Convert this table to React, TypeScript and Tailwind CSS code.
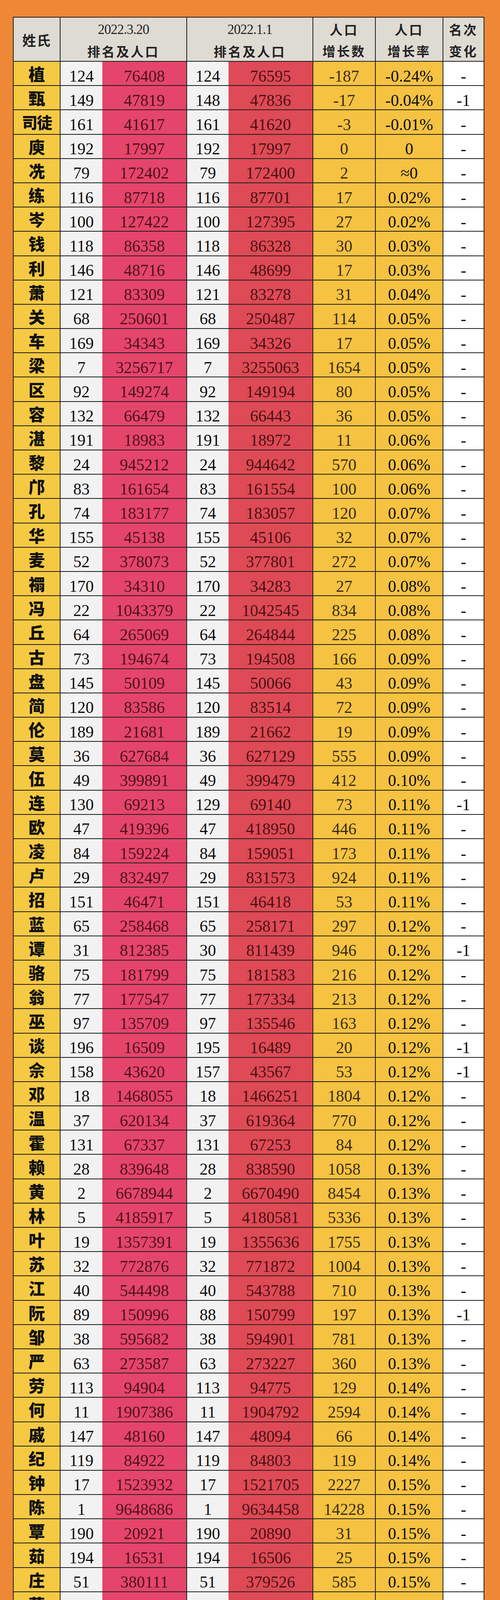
import React from 'react';

type Row = [string, string, string, string, string, string, string, string];

// 姓氏, 3.20排名, 3.20人口, 1.1排名, 1.1人口, 增长数, 增长率, 名次变化
const rows: Row[] = [
    ['植', '124', '76408', '124', '76595', '-187', '-0.24%', '-'],
    ['甄', '149', '47819', '148', '47836', '-17', '-0.04%', '-1'],
    ['司徒', '161', '41617', '161', '41620', '-3', '-0.01%', '-'],
    ['庾', '192', '17997', '192', '17997', '0', '0', '-'],
    ['冼', '79', '172402', '79', '172400', '2', '≈0', '-'],
    ['练', '116', '87718', '116', '87701', '17', '0.02%', '-'],
    ['岑', '100', '127422', '100', '127395', '27', '0.02%', '-'],
    ['钱', '118', '86358', '118', '86328', '30', '0.03%', '-'],
    ['利', '146', '48716', '146', '48699', '17', '0.03%', '-'],
    ['萧', '121', '83309', '121', '83278', '31', '0.04%', '-'],
    ['关', '68', '250601', '68', '250487', '114', '0.05%', '-'],
    ['车', '169', '34343', '169', '34326', '17', '0.05%', '-'],
    ['梁', '7', '3256717', '7', '3255063', '1654', '0.05%', '-'],
    ['区', '92', '149274', '92', '149194', '80', '0.05%', '-'],
    ['容', '132', '66479', '132', '66443', '36', '0.05%', '-'],
    ['湛', '191', '18983', '191', '18972', '11', '0.06%', '-'],
    ['黎', '24', '945212', '24', '944642', '570', '0.06%', '-'],
    ['邝', '83', '161654', '83', '161554', '100', '0.06%', '-'],
    ['孔', '74', '183177', '74', '183057', '120', '0.07%', '-'],
    ['华', '155', '45138', '155', '45106', '32', '0.07%', '-'],
    ['麦', '52', '378073', '52', '377801', '272', '0.07%', '-'],
    ['禤', '170', '34310', '170', '34283', '27', '0.08%', '-'],
    ['冯', '22', '1043379', '22', '1042545', '834', '0.08%', '-'],
    ['丘', '64', '265069', '64', '264844', '225', '0.08%', '-'],
    ['古', '73', '194674', '73', '194508', '166', '0.09%', '-'],
    ['盘', '145', '50109', '145', '50066', '43', '0.09%', '-'],
    ['简', '120', '83586', '120', '83514', '72', '0.09%', '-'],
    ['伦', '189', '21681', '189', '21662', '19', '0.09%', '-'],
    ['莫', '36', '627684', '36', '627129', '555', '0.09%', '-'],
    ['伍', '49', '399891', '49', '399479', '412', '0.10%', '-'],
    ['连', '130', '69213', '129', '69140', '73', '0.11%', '-1'],
    ['欧', '47', '419396', '47', '418950', '446', '0.11%', '-'],
    ['凌', '84', '159224', '84', '159051', '173', '0.11%', '-'],
    ['卢', '29', '832497', '29', '831573', '924', '0.11%', '-'],
    ['招', '151', '46471', '151', '46418', '53', '0.11%', '-'],
    ['蓝', '65', '258468', '65', '258171', '297', '0.12%', '-'],
    ['谭', '31', '812385', '30', '811439', '946', '0.12%', '-1'],
    ['骆', '75', '181799', '75', '181583', '216', '0.12%', '-'],
    ['翁', '77', '177547', '77', '177334', '213', '0.12%', '-'],
    ['巫', '97', '135709', '97', '135546', '163', '0.12%', '-'],
    ['谈', '196', '16509', '195', '16489', '20', '0.12%', '-1'],
    ['佘', '158', '43620', '157', '43567', '53', '0.12%', '-1'],
    ['邓', '18', '1468055', '18', '1466251', '1804', '0.12%', '-'],
    ['温', '37', '620134', '37', '619364', '770', '0.12%', '-'],
    ['霍', '131', '67337', '131', '67253', '84', '0.12%', '-'],
    ['赖', '28', '839648', '28', '838590', '1058', '0.13%', '-'],
    ['黄', '2', '6678944', '2', '6670490', '8454', '0.13%', '-'],
    ['林', '5', '4185917', '5', '4180581', '5336', '0.13%', '-'],
    ['叶', '19', '1357391', '19', '1355636', '1755', '0.13%', '-'],
    ['苏', '32', '772876', '32', '771872', '1004', '0.13%', '-'],
    ['江', '40', '544498', '40', '543788', '710', '0.13%', '-'],
    ['阮', '89', '150996', '88', '150799', '197', '0.13%', '-1'],
    ['邹', '38', '595682', '38', '594901', '781', '0.13%', '-'],
    ['严', '63', '273587', '63', '273227', '360', '0.13%', '-'],
    ['劳', '113', '94904', '113', '94775', '129', '0.14%', '-'],
    ['何', '11', '1907386', '11', '1904792', '2594', '0.14%', '-'],
    ['戚', '147', '48160', '147', '48094', '66', '0.14%', '-'],
    ['纪', '119', '84922', '119', '84803', '119', '0.14%', '-'],
    ['钟', '17', '1523932', '17', '1521705', '2227', '0.15%', '-'],
    ['陈', '1', '9648686', '1', '9634458', '14228', '0.15%', '-'],
    ['覃', '190', '20921', '190', '20890', '31', '0.15%', '-'],
    ['茹', '194', '16531', '194', '16506', '25', '0.15%', '-'],
    ['庄', '51', '380111', '51', '379526', '585', '0.15%', '-'],
    ['蔡', '20', '1291898', '20', '1289904', '1994', '0.15%', '-'],
    ['许', '23', '1019638', '23', '1018064', '1574', '0.15%', '-'],
    ['柯', '71', '201097', '71', '200781', '316', '0.16%', '-'],
    ['成', '105', '112434', '105', '112257', '177', '0.16%', '-'],
    ['廖', '26', '891388', '26', '889972', '1416', '0.16%', '-'],
    ['潘', '33', '745580', '33', '744391', '1189', '0.16%', '-'],
    ['谢', '14', '1659945', '14', '1657260', '2685', '0.16%', '-'],
    ['沈', '56', '314669', '56', '314156', '513', '0.16%', '-'],
    ['余', '35', '731187', '35', '729975', '1212', '0.17%', '-'],
    ['罗', '13', '1733609', '13', '1730704', '2905', '0.17%', '-'],
    ['詹', '61', '280069', '61', '279597', '472', '0.17%', '-'],
    ['傅', '103', '114746', '103', '114551', '195', '0.17%', '-'],
    ['邬', '152', '45703', '152', '45625', '78', '0.17%', '-'],
    ['池', '174', '33373', '174', '33316', '57', '0.17%', '-'],
    ['曾', '15', '1589754', '15', '1587038', '2716', '0.17%', '-'],
    ['吴', '8', '3162095', '8', '3156682', '5413', '0.17%', '-'],
    ['吕', '58', '312335', '57', '311800', '535', '0.17%', '-1'],
    ['陆', '53', '350298', '53', '349696', '602', '0.17%', '-'],
    ['饶', '136', '62570', '135', '62462', '108', '0.17%', '-1'],
    ['郑', '12', '1866506', '12', '1863278', '3228', '0.17%', '-'],
    ['郭', '25', '932640', '25', '930985', '1655', '0.18%', '-'],
    ['缪', '156', '43956', '156', '43876', '80', '0.18%', '-'],
    ['刁', '160', '41743', '160', '41667', '76', '0.18%', '-'],
    ['范', '55', '325387', '55', '324788', '599', '0.18%', '-'],
    ['杜', '62', '276693', '62', '276177', '516', '0.19%', '-'],
    ['房', '123', '81473', '123', '81321', '152', '0.19%', '-'],
    ['姚', '48', '407821', '48', '407060', '761', '0.19%', '-'],
    ['毕', '176', '30986', '176', '30928', '58', '0.19%', '-'],
    ['方', '46', '426829', '46', '426011', '818', '0.19%', '-'],
    ['卓', '85', '152753', '85', '152459', '294', '0.19%', '-'],
    ['李', '3', '6369141', '3', '6356697', '12444', '0.20%', '-'],
    ['官', '134', '64929', '134', '64799', '130', '0.20%', '-'],
    ['洪', '54', '346318', '54', '345622', '696', '0.20%', '-'],
    ['尤', '173', '33664', '172', '33596', '68', '0.20%', '-1'],
    ['邵', '45', '435701', '45', '434814', '887', '0.20%', '-'],
    ['甘', '87', '152045', '87', '151734', '311', '0.20%', '-'],
];

const serif = "font-['Liberation_Serif','Times_New_Roman',serif]";
const cjk = "font-['Noto_Sans_CJK_SC','Noto_Sans',sans-serif]";
const num = `${serif} flex items-center justify-center pt-[13px] text-[42px] leading-none`;

function HeaderCell({ top, bottom, className = '' }: { top: string; bottom: string; className?: string }) {
    const isDate = /^\d/.test(top);
    return (
        <div className={`flex flex-col items-center justify-center gap-[22px] pt-1 text-[#232323] ${className}`}>
            <span
                className={
                    isDate
                        ? `${serif} text-[35px] leading-none tracking-[-1px]`
                        : `${cjk} text-[33px] font-bold leading-none tracking-[4px]`
                }
            >
                {top}
            </span>
            <span className={`${cjk} text-[33px] font-bold leading-none tracking-[4px]`}>{bottom}</span>
        </div>
    );
}

export default function App() {
    return (
        <div className="h-[6301px] w-[1280px] overflow-hidden bg-[#ef8836] pl-[33px] pt-[43px]">
            <div className="w-[1207px] border-2 border-[#1d1d1d]">
                {/* Header */}
                <div className="grid h-[113px] grid-cols-[120px_324px_323px_160px_173px_103px] border-b-2 border-[#1d1d1d] bg-[#dedbd3]">
                    <div className={`${cjk} flex items-center justify-center border-r-2 border-[#1d1d1d] pt-1 text-[35px] font-bold tracking-[2px] text-[#232323]`}>
                        姓氏
                    </div>
                    <HeaderCell top="2022.3.20" bottom="排名及人口" className="border-r-2 border-[#1d1d1d]" />
                    <HeaderCell top="2022.1.1" bottom="排名及人口" className="border-r-2 border-[#1d1d1d]" />
                    <HeaderCell top="人口" bottom="增长数" className="border-r-2 border-[#1d1d1d]" />
                    <HeaderCell top="人口" bottom="增长率" className="border-r-2 border-[#1d1d1d]" />
                    <HeaderCell top="名次" bottom="变化" />
                </div>

                {/* Rows */}
                {rows.map(([name, r1, p1, r2, p2, diff, rate, change], i) => (
                    <div
                        key={i}
                        className="grid h-[62.19px] grid-cols-[120px_107px_217px_106px_217px_160px_173px_103px] border-b-2 border-[#1d1d1d]"
                    >
                        <div
                            className={`${cjk} flex items-center justify-center overflow-hidden border-r-2 border-[#1d1d1d] bg-[#f6c943] font-black leading-none text-[#111] ${name.length > 1 ? 'text-[40px] tracking-[-2px]' : 'text-[42px]'}`}
                        >
                            {name}
                        </div>
                        <div className={`${num} bg-[#f2f2f2] text-[#0d0d0d]`}>{r1}</div>
                        <div className={`${num} border-r-2 border-[#1d1d1d] bg-[#e5456a] text-[#4e1019]`}>{p1}</div>
                        <div className={`${num} bg-[#f2f2f2] text-[#0d0d0d]`}>{r2}</div>
                        <div className={`${num} border-r-2 border-[#1d1d1d] bg-[#de4a55] text-[#4a1015]`}>{p2}</div>
                        <div className={`${num} border-r-2 border-[#1d1d1d] bg-[#f5c242] text-[#3a2c12]`}>{diff}</div>
                        <div className={`${num} border-r-2 border-[#1d1d1d] bg-[#f5c242] text-[#0d0d0d]`}>{rate}</div>
                        <div className={`${num} bg-white text-[#0d0d0d]`}>{change}</div>
                    </div>
                ))}
            </div>
        </div>
    );
}
